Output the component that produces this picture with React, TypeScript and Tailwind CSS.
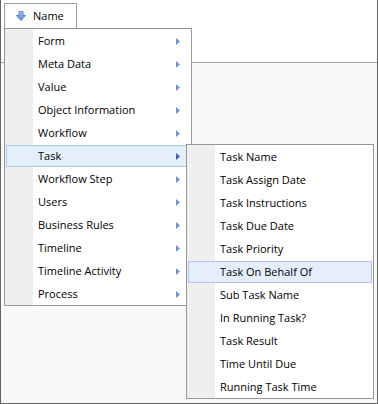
const mainItems = [
  "Form",
  "Meta Data",
  "Value",
  "Object Information",
  "Workflow",
  "Task",
  "Workflow Step",
  "Users",
  "Business Rules",
  "Timeline",
  "Timeline Activity",
  "Process",
];

const taskItems = [
  "Task Name",
  "Task Assign Date",
  "Task Instructions",
  "Task Due Date",
  "Task Priority",
  "Task On Behalf Of",
  "Sub Task Name",
  "In Running Task?",
  "Task Result",
  "Time Until Due",
  "Running Task Time",
];

function Arrow({ dark }: { dark?: boolean }) {
  return (
    <svg width="4" height="7" viewBox="0 0 4 7" className="shrink-0">
      <polygon points="0,0 4,3.5 0,7" fill={dark ? "#3b63b3" : "#7394d0"} />
    </svg>
  );
}

function MenuItem({ label, active, sub }: { label: string; active?: boolean; sub?: boolean }) {
  return (
    <div className="relative h-[23px] pt-px">
      <div
        className={
          "flex h-[22px] items-center justify-between pl-[31px] pr-[9px] border " +
          (active ? "mx-px bg-[#e5effc] border-[#a9c7ef]" : "mx-px border-transparent")
        }
      >
        <span className="whitespace-nowrap">{label}</span>
        {sub && <Arrow dark={active} />}
      </div>
    </div>
  );
}

function Menu({ items, active, sub }: { items: string[]; active: string; sub?: boolean }) {
  return (
    <div className="relative w-[188px] border border-[#979797] bg-white">
      <div className="absolute left-0 top-0 bottom-0 w-[28px] bg-[#efefef]" />
      {items.map((item) => (
        <MenuItem key={item} label={item} active={item === active} sub={sub} />
      ))}
    </div>
  );
}

export default function App() {
  return (
    <div
      className="relative w-[378px] h-[404px] border-x border-b border-[#646464] bg-[#f9f9f9] text-[11px] text-black"
      style={{ fontFamily: '"Open Sans", "Liberation Sans", sans-serif' }}
    >
      <div className="h-[63px] bg-white border-b border-[#a0a0a0] pt-[3px] pl-[3px]">
        <div className="flex h-[25px] w-[73px] items-center gap-[7px] border border-b-0 border-[#a0a0a0] bg-white pl-[11px]">
          <svg width="10" height="10" viewBox="0 0 10 10">
            <defs>
              <linearGradient id="ag" x1="0" y1="0" x2="0" y2="1">
                <stop offset="0" stopColor="#a9c6f0" />
                <stop offset="1" stopColor="#5a8ad6" />
              </linearGradient>
            </defs>
            <path
              d="M3 0.5 H7 V4.5 H9.5 L5 9.5 L0.5 4.5 H3 Z"
              fill="url(#ag)"
              stroke="#5b86c9"
              strokeWidth="1"
              strokeLinejoin="round"
            />
          </svg>
          <span>Name</span>
        </div>
      </div>

      <div className="absolute left-[3px] top-[28px]">
        <Menu items={mainItems} active="Task" sub />
      </div>

      <div className="absolute left-[185px] top-[144px]">
        <Menu items={taskItems} active="Task On Behalf Of" />
      </div>
    </div>
  );
}
